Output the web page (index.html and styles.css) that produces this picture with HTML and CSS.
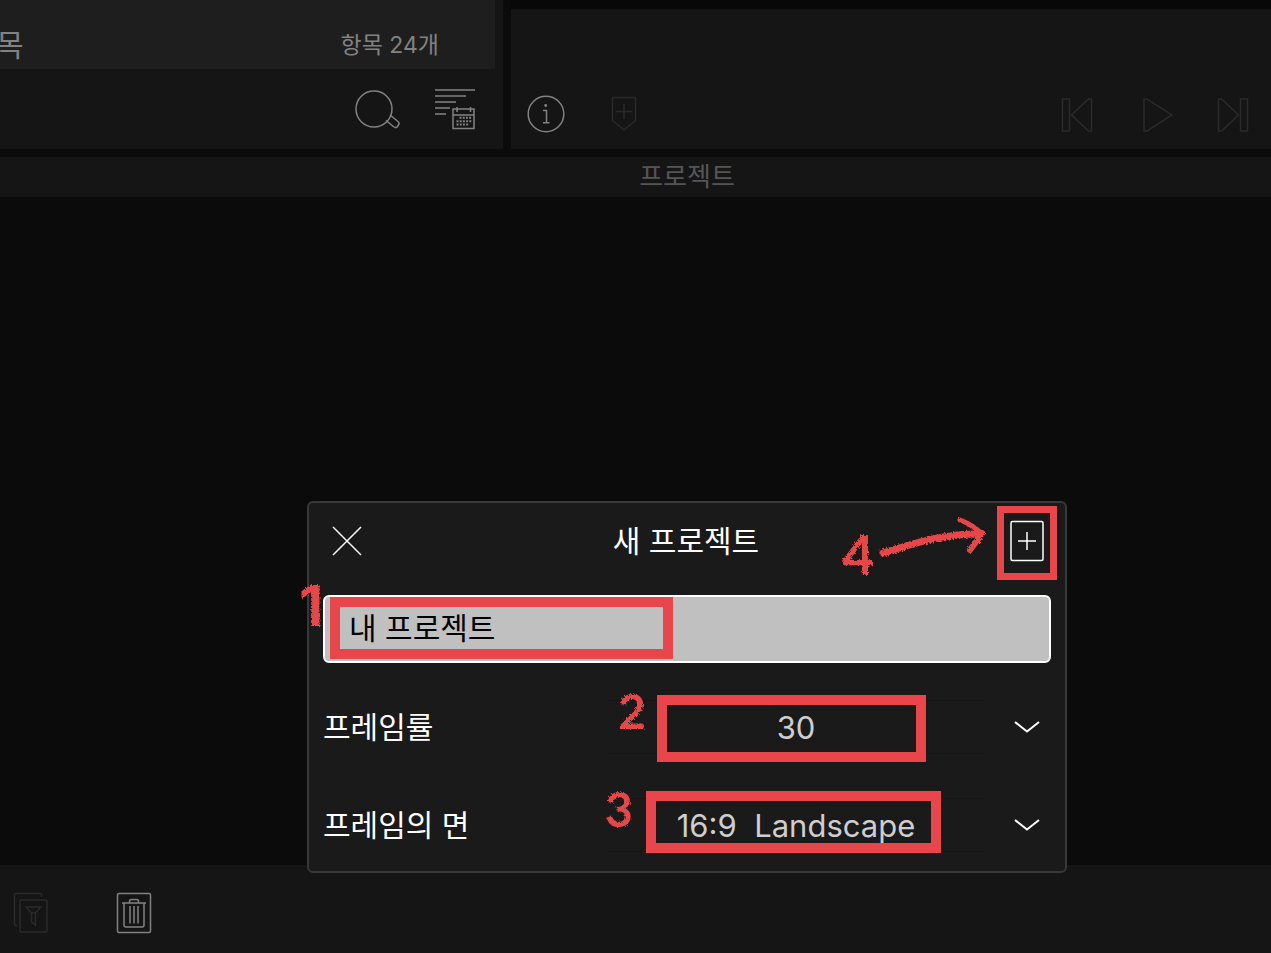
FILE: index.html
```html
<!DOCTYPE html>
<html lang="ko">
  <head>
    <meta charset="UTF-8" />
    <meta name="viewport" content="width=device-width, initial-scale=1.0" />
    <title>새 프로젝트</title>
    <link rel="stylesheet" href="styles.css">
  </head>
  <body>
    <!-- chalk texture for the hand-drawn notes -->
    <svg class="defs" width="0" height="0" aria-hidden="true">
      <filter id="chalk" x="-10%" y="-10%" width="120%" height="120%">
        <feTurbulence type="fractalNoise" baseFrequency="0.6" numOctaves="2" seed="4" result="noise" />
        <feDisplacementMap in="SourceGraphic" in2="noise" scale="4" />
      </filter>
    </svg>

    <div class="panels">
      <section class="library">
        <div class="library-head">
          <span class="library-name">목</span>
          <span class="library-count">항목 24개</span>
        </div>
        <div class="library-tools">
          <button type="button" aria-label="검색">
            <svg width="48" height="44" viewBox="0 0 48 44">
              <circle cx="20" cy="22" r="18" />
              <path d="M36 28l8 6.500q2 1.500 .5 3.500l-1 1.500q-1.500 2-3.500 .5l-8-6.500" />
            </svg>
          </button>
          <button type="button" aria-label="정렬">
            <svg width="40" height="42" viewBox="0 0 40 42">
              <path d="M0 2h40M0 8h31M0 14h21M0 20h15M0 26h11" stroke-width="1.6" />
              <path d="M18 21h21v19.5h-21zM18 27h21M22 19v5M35.500 19v5" />
              <path d="M24.500 29.800h12M21.500 33.200h15M21.500 36.500h12" stroke-width="2" stroke-dasharray="2 1.200" />
            </svg>
          </button>
        </div>
      </section>

      <section class="preview">
        <div class="preview-tools">
          <button type="button" aria-label="정보">
            <svg width="38" height="38" viewBox="0 0 38 38">
              <circle cx="19" cy="19" r="17.800" />
              <path d="M16 15.500h3.500v12M16 27.800h6.500" />
              <circle class="dot" cx="18.700" cy="10.500" r="1.400" />
            </svg>
          </button>
          <button type="button" class="off" aria-label="마커 추가" disabled>
            <svg width="26" height="38" viewBox="0 0 26 38">
              <path d="M2.500 2.500h21q1 0 1 1v22l-11.500 9.500-11.500-9.500v-22q0-1 1-1zM13 9v15M5 16.500h16" />
            </svg>
          </button>
          <div class="transport">
            <button type="button" class="off" aria-label="이전" disabled>
              <svg width="32" height="36" viewBox="0 0 32 36">
                <path d="M1.500 3h7v32h-7zM30.500 3h-3L10.500 19l17 16h3z" />
              </svg>
            </button>
            <button type="button" class="off" aria-label="재생" disabled>
              <svg width="36" height="36" viewBox="0 0 36 36">
                <path d="M7 3h3l25 16-25 16H7z" />
              </svg>
            </button>
            <button type="button" class="off" aria-label="다음" disabled>
              <svg width="32" height="36" viewBox="0 0 32 36">
                <path d="M1.500 3h3l17 16-17 16h-3zM23.500 3h7v32h-7z" />
              </svg>
            </button>
          </div>
        </div>
      </section>
    </div>

    <div class="project-bar"><h1>프로젝트</h1></div>

    <main></main>

    <footer>
      <button type="button" class="off" aria-label="필터" disabled>
        <svg width="36" height="42" viewBox="0 0 36 42">
          <path d="M4 33.500H2.500q-1 0-1-1v-30q0-1 1-1h25q1 0 1 1V5" />
          <rect x="7" y="8" width="27" height="32" rx="1.500" />
          <path d="M13 15h15l-5.500 6h-4zM18.500 21v9l4 3V21" />
        </svg>
      </button>
      <button type="button" aria-label="삭제">
        <svg width="36" height="42" viewBox="0 0 36 42">
          <rect x="1.500" y="1.500" width="33" height="39" rx="1.500" />
          <path d="M6 11h24M8 11v22q0 2 2 2h16q2 0 2-2V11M13.500 11V9.500q0-2 2-2h5q2 0 2 2V11M14 14v17.500M18 14v17.500M22 14v17.500" />
        </svg>
      </button>
    </footer>

    <div class="overlay">
      <form class="dialog" role="dialog" aria-labelledby="dialogTitle">
        <div class="dialog-head">
          <button type="button" class="close" aria-label="닫기">
            <svg width="32" height="32" viewBox="0 0 32 32">
              <path d="M2 2l28 28M30 2L2 30" />
            </svg>
          </button>
          <h2 id="dialogTitle">새 프로젝트</h2>
          <button type="button" class="create" aria-label="만들기">
            <svg width="36" height="42" viewBox="0 0 36 42">
              <rect x="2" y="1.500" width="32" height="39" rx="1.500" />
              <path d="M18 12v18M9 21h18" />
            </svg>
            <span class="mark mark-create"></span>
          </button>
          <span class="note note-four">4</span>
          <svg class="arrow" width="108" height="42" viewBox="0 0 108 42" aria-hidden="true">
            <path d="M5 37C32 29 65 17 102 18" stroke-width="7" />
            <path d="M82 4c8 3 15 7 22 14" stroke-width="5" />
            <path d="M104 17c-3 6-8 11-12 17" stroke-width="6" />
          </svg>
        </div>

        <div class="name-field">
          <input type="text" id="name" aria-label="프로젝트 이름" value="내 프로젝트" />
          <span class="mark mark-name"></span>
          <span class="note note-one">1</span>
        </div>

        <div class="row">
          <label for="rate">프레임률</label>
          <div class="picker">
            <select id="rate">
              <option>30</option>
            </select>
            <span class="mark mark-rate"></span>
            <span class="note note-two">2</span>
          </div>
          <svg class="chevron" width="28" height="16" viewBox="0 0 28 16" aria-hidden="true">
            <path d="M2 3l12 9.500L26 3" />
          </svg>
        </div>

        <div class="row">
          <label for="aspect">프레임의 면</label>
          <div class="picker">
            <select id="aspect">
              <option>16:9&nbsp; Landscape</option>
            </select>
            <span class="mark mark-aspect"></span>
            <span class="note note-three">3</span>
          </div>
          <svg class="chevron" width="28" height="16" viewBox="0 0 28 16" aria-hidden="true">
            <path d="M2 3l12 9.500L26 3" />
          </svg>
        </div>
      </form>
    </div>
  </body>
</html>
```
FILE: styles.css
```css
* {
  box-sizing: border-box;
}
body {
  font-family: "Inter", "Noto Sans CJK KR", sans-serif;
  background-color: #0b0b0b;
  color: #828282;
  margin: 0;
  min-height: 100vh;
  display: flex;
  flex-direction: column;
  position: relative;
  overflow: hidden;
}
button {
  display: block;
  padding: 0;
  border: 0;
  background: none;
  color: inherit;
  cursor: pointer;
}
svg {
  display: block;
  fill: none;
  stroke: currentColor;
  stroke-width: 1.5;
}
.dot {
  fill: currentColor;
  stroke: none;
}
.off {
  color: #2a2a2a;
  cursor: default;
}
.defs {
  position: absolute;
}

.panels {
  display: flex;
  gap: 8px;
  height: 149px;
}
.library {
  flex: 0 0 503px;
  background: #151515;
}
.library-head {
  display: flex;
  justify-content: space-between;
  align-items: center;
  height: 69px;
  margin-right: 8px;
  padding: 20px 56px 0 0;
  background: #1e1e1e;
}
.library-name {
  font-size: 30px;
  line-height: 32px;
  margin-left: -4px;
}
.library-count {
  font-size: 23px;
  line-height: 32px;
}
.library-tools {
  display: flex;
  justify-content: flex-end;
  align-items: center;
  gap: 33px;
  height: 80px;
  padding-right: 28px;
}
.preview {
  flex: 1;
  display: flex;
  align-items: flex-end;
  border-top: 9px solid #080808;
  background: #151515;
}
.preview-tools {
  flex: 1;
  display: flex;
  align-items: center;
  gap: 46px;
  height: 70px;
  padding: 0 22px 0 16px;
}
.transport {
  display: flex;
  gap: 44px;
  margin-left: auto;
}

.project-bar {
  margin-top: 8px;
  padding-left: 103px;
  height: 40px;
  background: #151515;
}
h1 {
  margin: 0;
  text-align: center;
  font-size: 26px;
  line-height: 40px;
  font-weight: 400;
  color: #555;
}
main {
  flex: 1;
}
footer {
  display: flex;
  align-items: flex-start;
  gap: 67px;
  height: 88px;
  padding: 27px 13px;
  background: #151515;
}

/* dialog */
.overlay {
  position: absolute;
  inset: 0;
  display: flex;
  justify-content: center;
  align-items: flex-end;
  padding: 0 0 80px 103px;
}
.dialog {
  width: 760px;
  padding: 0 14px 19px;
  border: 2px solid #383838;
  border-radius: 6px;
  background: #1a1a1a;
  color: #fff;
  font-size: 30px;
}
.dialog-head {
  position: relative;
  display: flex;
  justify-content: space-between;
  align-items: center;
  height: 76px;
  margin-bottom: 16px;
  padding: 0 6px 0 8px;
}
h2 {
  margin: 0;
  font-size: 30px;
  line-height: 40px;
  font-weight: 400;
}
.create {
  position: relative;
}
.name-field {
  position: relative;
  margin-bottom: 37px;
}
.name-field input {
  display: block;
  width: 100%;
  height: 68px;
  padding: 0 24px 6px;
  border: 2px solid #fff;
  border-radius: 6px;
  background: #c0c0c0;
  color: #000;
  font: inherit;
  outline: none;
}
.row {
  display: flex;
  align-items: center;
}
.row + .row {
  margin-top: 44px;
}
.row label {
  flex: 1;
  line-height: 40px;
}
.picker {
  position: relative;
  flex: 0 0 376px;
}
.picker select {
  display: block;
  width: 100%;
  height: 54px;
  padding: 0;
  appearance: none;
  border: solid #151515;
  border-width: 1px 0;
  background: none;
  color: #cecece;
  font: inherit;
  font-size: 31px;
  text-align: center;
  text-align-last: center;
}
.chevron {
  margin: 0 10px 0 29px;
  stroke-width: 2;
}

/* red notes */
.mark {
  position: absolute;
  border: 10px solid #e8464a;
  pointer-events: none;
}
.mark-create {
  left: -12px;
  top: -14px;
  width: 60px;
  height: 74px;
  border-width: 7px;
}
.mark-name {
  left: 7px;
  top: 2px;
  width: 343px;
  height: 62px;
}
.mark-rate {
  left: 49px;
  top: -5px;
  width: 269px;
  height: 67px;
}
.mark-aspect {
  left: 38px;
  top: -7px;
  width: 295px;
  height: 62px;
}
.note {
  position: absolute;
  font-family: "Lato", sans-serif;
  font-size: 48px;
  line-height: 48px;
  font-weight: 700;
  color: #e8464a;
  filter: url(#chalk);
}
.note-one {
  left: -24px;
  top: -13px;
  font-family: "Inter", sans-serif;
  font-size: 56px;
}
.note-two {
  left: 10px;
  top: -13px;
}
.note-three {
  left: -3px;
  top: -13px;
}
.note-four {
  left: 519px;
  top: 27px;
  font-size: 56px;
}
.arrow {
  position: absolute;
  left: 555px;
  top: 13px;
  color: #e8464a;
  stroke-linecap: round;
  filter: url(#chalk);
}
```
